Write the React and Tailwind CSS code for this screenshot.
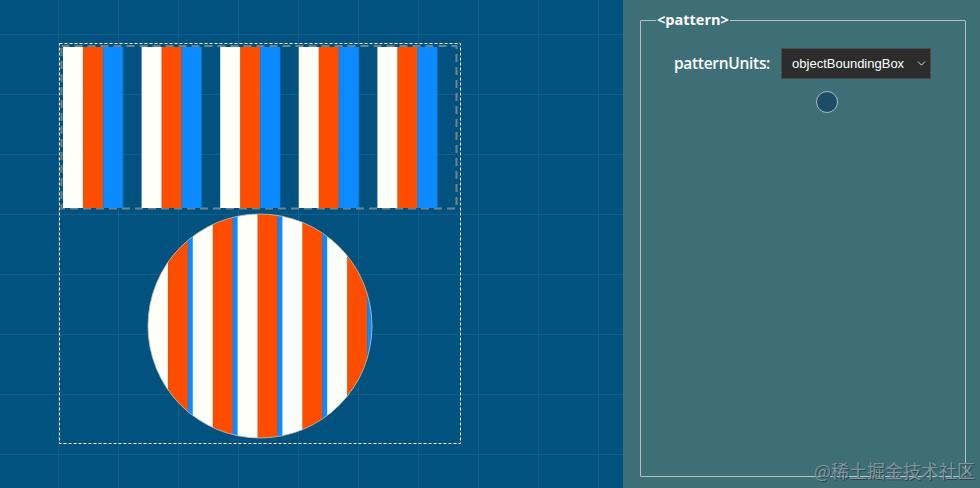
import { ChevronDown } from 'lucide-react'

function Canvas() {
  return (
    <svg width="623" height="488" className="block">
      <defs>
        <pattern id="grid" patternUnits="userSpaceOnUse" x="58" y="34" width="60" height="60">
          <path d="M0.5 0 V60 M0 0.5 H60" stroke="#125e8b" strokeWidth="1" fill="none" />
        </pattern>
        <pattern id="stripes" patternUnits="objectBoundingBox" x="0" y="0" width="0.2" height="1">
          <rect x="0" y="0" width="20" height="600" fill="#fffffa" />
          <rect x="20" y="0" width="20" height="600" fill="#ff4d00" />
          <rect x="40" y="0" width="20" height="600" fill="#0b8bff" />
        </pattern>
      </defs>
      <rect width="623" height="488" fill="#01527f" />
      <rect width="623" height="488" fill="url(#grid)" />

      <rect x="59.5" y="43.5" width="401" height="400" fill="none" stroke="#ffffff" strokeWidth="1" strokeDasharray="3 2" />

      <rect x="61.5" y="46" width="395" height="162.5" fill="none" stroke="#6f838d" strokeWidth="2" strokeDasharray="8 5" />
      <rect x="63" y="47" width="393" height="161" fill="url(#stripes)" />

      <circle cx="260" cy="326" r="112" fill="url(#stripes)" stroke="#c8c3b0" strokeWidth="0.8" />
    </svg>
  )
}

export default function App() {
  return (
    <div className="w-[980px] h-[488px] flex overflow-hidden relative" style={{ fontFamily: '"Open Sans", sans-serif' }}>
      <div className="w-[623px] h-full shrink-0">
        <Canvas />
      </div>

      <div className="flex-1 h-full bg-[#3e6f76] pt-[11px] pl-[17px] pr-[14px] pb-[11px]">
        <fieldset className="h-full border border-[#b5c2c5] rounded-[1px]">
          <legend className="ml-[15px] px-[1px] text-[14.5px] font-bold text-white leading-[18px]">&lt;pattern&gt;</legend>

          <div className="flex items-center gap-[11px] pl-[33px] mt-[19px]">
            <span className="text-[15.5px] font-semibold text-white tracking-[-0.3px]">patternUnits:</span>
            <div className="w-[150px] h-[31px] bg-[#2c2c2c] border border-[#4a4a4a] flex items-center justify-between pl-[10px] pr-[2px]">
              <span className="text-[13px] text-white" style={{ fontFamily: '"Liberation Sans", Arial, sans-serif' }}>objectBoundingBox</span>
              <ChevronDown className="w-[13px] h-[13px] text-white" strokeWidth={1.5} />
            </div>
          </div>

          <div className="ml-[175px] mt-[12px] w-[22px] h-[22px] rounded-full bg-[#1d4c66] border-[1.5px] border-[#a7bcc4]" />
        </fieldset>
      </div>

      <div
        className="absolute right-[5px] bottom-[9px] text-[18px] text-[#7f959b] leading-none"
        style={{ fontFamily: '"Noto Sans CJK SC", sans-serif', textShadow: '1px 1px 0 #2a4a52' }}
      >
        @稀土掘金技术社区
      </div>
    </div>
  )
}
